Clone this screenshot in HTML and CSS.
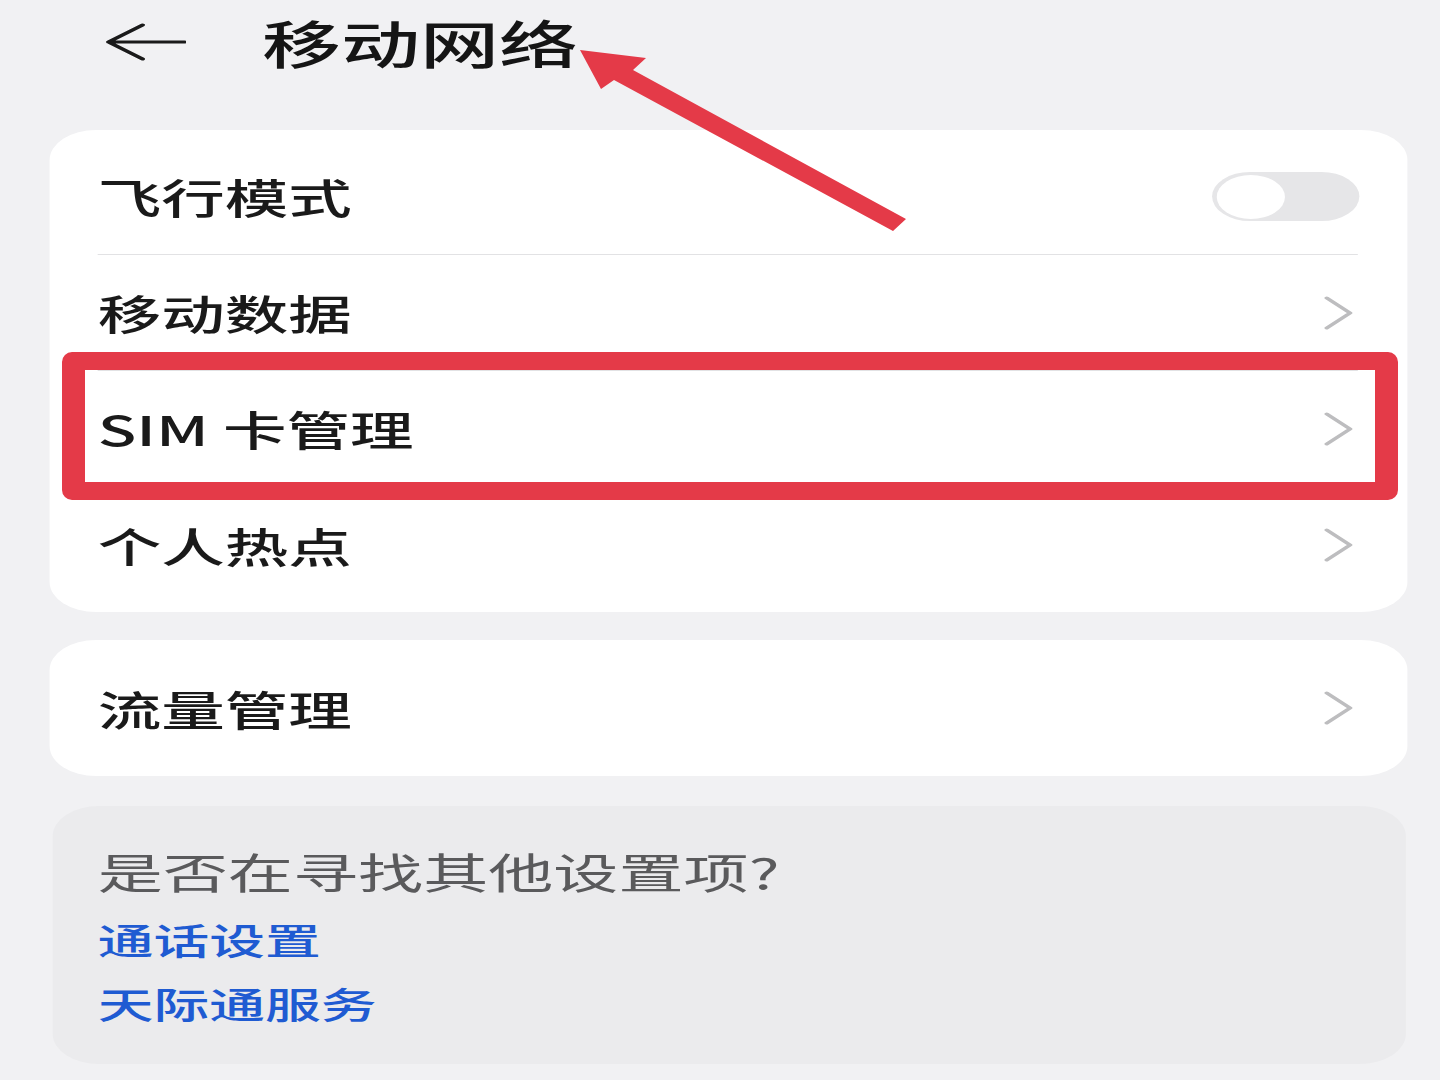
FILE: index.html
```html
<!DOCTYPE html>
<html lang="zh-CN">
<head>
<meta charset="utf-8">
<title>移动网络</title>
<link rel="stylesheet" href="styles.css">
</head>
<body>
<div class="screen">
  <header class="topbar">
    <svg class="back" viewBox="0 0 52 44" width="52" height="44">
      <path d="M24 5 L2 22 L24 39 M2 22 H51" fill="none" stroke="#1a1a1a" stroke-width="3" stroke-linecap="round" stroke-linejoin="round"/>
    </svg>
    <h1 class="title">移动网络</h1>
  </header>

  <section class="card">
    <div class="row">
      <span class="label">飞行模式</span>
      <span class="toggle"><span class="knob"></span></span>
    </div>
    <div class="row">
      <span class="label">移动数据</span>
      <svg class="chev" viewBox="0 0 22 34" width="22" height="34"><path d="M4 2 L19 17 L4 32" fill="none" stroke="#bdbdbf" stroke-width="3" stroke-linecap="round" stroke-linejoin="round"/></svg>
    </div>
    <div class="row">
      <span class="label">SIM 卡管理</span>
      <svg class="chev" viewBox="0 0 22 34" width="22" height="34"><path d="M4 2 L19 17 L4 32" fill="none" stroke="#bdbdbf" stroke-width="3" stroke-linecap="round" stroke-linejoin="round"/></svg>
    </div>
    <div class="row">
      <span class="label">个人热点</span>
      <svg class="chev" viewBox="0 0 22 34" width="22" height="34"><path d="M4 2 L19 17 L4 32" fill="none" stroke="#bdbdbf" stroke-width="3" stroke-linecap="round" stroke-linejoin="round"/></svg>
    </div>
  </section>

  <section class="card card-single">
    <div class="row">
      <span class="label">流量管理</span>
      <svg class="chev" viewBox="0 0 22 34" width="22" height="34"><path d="M4 2 L19 17 L4 32" fill="none" stroke="#bdbdbf" stroke-width="3" stroke-linecap="round" stroke-linejoin="round"/></svg>
    </div>
  </section>

  <section class="suggest">
    <p class="question">是否在寻找其他设置项?</p>
    <a class="link">通话设置</a>
    <a class="link">天际通服务</a>
  </section>
</div>

<div class="mark-box"></div>
<svg class="mark-arrow" viewBox="0 0 1440 1080" width="1440" height="1080">
  <polygon points="580,50 646,58 633,70 906,219 893,231 614,80 601,89" fill="#e43a48"/>
</svg>
</body>
</html>
```

FILE: styles.css
```css
html, body {
  margin: 0;
  padding: 0;
}
body {
  width: 1440px;
  height: 1080px;
  overflow: hidden;
  background: #f1f1f3;
  position: relative;
  font-family: "Noto Sans CJK SC", "Noto Sans", sans-serif;
  color: #1b1b1b;
}
.screen {
  width: 929px;
  transform: scaleX(1.55);
  transform-origin: 0 0;
}
.topbar {
  height: 84px;
  display: flex;
  align-items: center;
  padding-left: 68px;
  gap: 49px;
}
.back {
  display: block;
  flex: none;
}
.title {
  margin: 0;
  font-size: 51px;
  font-weight: 500;
  line-height: 1;
  color: #151515;
}
.card {
  margin: 46px 21px 0 32px;
  background: #ffffff;
  border-radius: 30px;
  padding: 9px 32px 9px 31px;
}
.card-single {
  margin-top: 28px;
  padding: 10px 32px 10px 31px;
}
.row {
  height: 116px;
  display: flex;
  align-items: center;
  justify-content: space-between;
  border-bottom: 1px solid #e2e2e4;
  box-sizing: border-box;
}
.row:last-child {
  border-bottom: none;
}
.label {
  font-size: 41px;
  font-weight: 500;
  line-height: 1;
  color: #1a1a1a;
}
.chev {
  display: block;
  margin-right: 2px;
}
.toggle {
  width: 95px;
  height: 49px;
  border-radius: 25px;
  background: #e6e6e8;
  display: flex;
  align-items: center;
  padding-left: 3px;
  box-sizing: border-box;
  margin-right: -1px;
}
.knob {
  width: 44px;
  height: 44px;
  border-radius: 50%;
  background: #ffffff;
}
.suggest {
  margin: 30px 22px 0 34px;
  background: #ebebed;
  border-radius: 30px;
  padding: 40px 32px 29px 29px;
}
.question {
  margin: 0 0 11px;
  font-size: 42px;
  line-height: 50px;
  font-weight: 400;
  color: #5a5a5c;
}
.link {
  display: block;
  font-size: 36px;
  line-height: 64px;
  font-weight: 500;
  color: #1f5bd2;
}
.mark-box {
  position: absolute;
  left: 62px;
  top: 352px;
  width: 1336px;
  height: 148px;
  box-sizing: border-box;
  border-style: solid;
  border-color: #e43a48;
  border-width: 18px 23px;
  border-radius: 10px;
}
.mark-arrow {
  position: absolute;
  left: 0;
  top: 0;
}
```
